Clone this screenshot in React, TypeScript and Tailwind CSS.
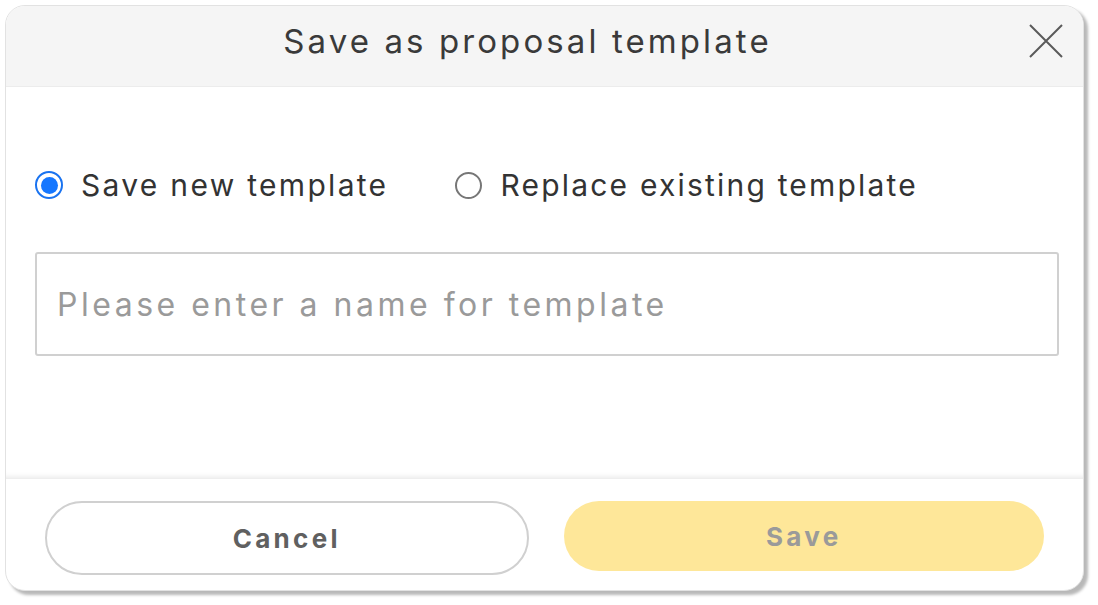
import React from "react";

export default function App() {
  const font = { fontFamily: "Inter, 'Noto Sans', sans-serif" };
  return (
    <div className="w-[1098px] h-[605px] bg-white" style={font}>
      <div className="ml-[5px] pt-[5px]">
        <div className="w-[1079px] h-[586px] rounded-[20px] border border-[#e2e2e2] bg-white shadow-[4px_4px_3px_rgba(0,0,0,0.28)] overflow-hidden flex flex-col">
          <div className="h-[81px] bg-[#f5f5f5] border-b border-[#ececec] flex items-center relative">
            <div className="w-full pr-[34px] pb-[8px] text-center text-[33px] text-[#3a3a3a] tracking-[3.1px]">
              Save as proposal template
            </div>
            <button className="absolute right-[19px] top-[17px] w-[36px] h-[36px]">
              <svg viewBox="0 0 36 36" width="36" height="36">
                <path d="M2 2 L34 34 M34 2 L2 34" stroke="#5a5a5a" strokeWidth="2" fill="none" />
              </svg>
            </button>
          </div>
          <div className="flex-1 pl-[29px] pr-[24px] pt-[84px] shadow-[inset_0_-6px_6px_-6px_rgba(0,0,0,0.12)]">
            <div className="flex items-center h-[28px]">
              <label className="flex items-center">
                <span className="w-[28px] h-[28px] rounded-full border-[2px] border-[#1a73f0] flex items-center justify-center">
                  <span className="w-[17px] h-[17px] rounded-full bg-[#1677ff]" />
                </span>
                <span className="ml-[18px] text-[30px] text-[#333] tracking-[2.3px]">Save new template</span>
              </label>
              <label className="flex items-center ml-[67px]">
                <span className="w-[27px] h-[27px] rounded-full border-[2px] border-[#777]" />
                <span className="ml-[18px] text-[30px] text-[#333] tracking-[2.2px]">Replace existing template</span>
              </label>
            </div>
            <div className="mt-[53px] h-[104px] rounded-[3px] border-[2px] border-[#d0d0d0] flex items-center px-[20px] pt-[2px]">
              <span className="text-[32px] text-[#9a9a9a] tracking-[3.5px]">Please enter a name for template</span>
            </div>
          </div>
          <div className="h-[112px] border-t border-[#eeeeee] flex px-[39px] pt-[22px] gap-[35px]">
            <button className="w-[484px] h-[74px] rounded-full border-[2px] border-[#d0d0d0] text-[26px] font-bold text-[#606060] tracking-[3.3px]">
              Cancel
            </button>
            <button className="w-[481px] h-[70px] rounded-full bg-[#fee799] text-[26px] font-bold text-[#9a9a9a] tracking-[3.3px]">
              Save
            </button>
          </div>
        </div>
      </div>
    </div>
  );
}
